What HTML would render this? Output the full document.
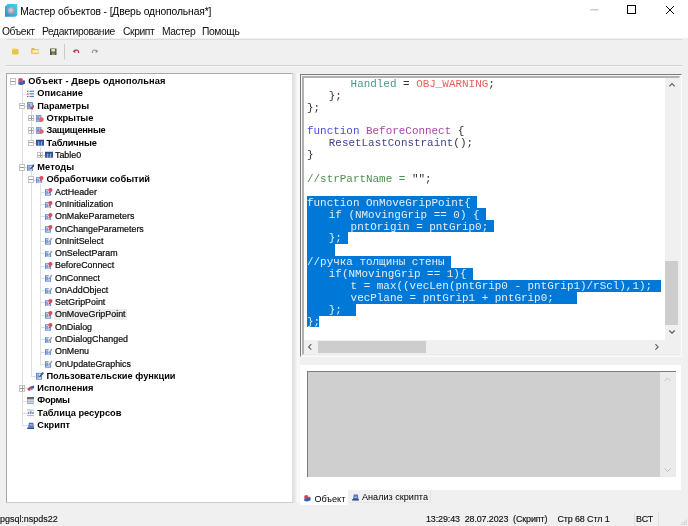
<!DOCTYPE html>
<html lang="ru"><head><meta charset="utf-8"><title>Мастер объектов</title>
<style>
html,body{margin:0;padding:0;}
body{width:688px;height:526px;overflow:hidden;position:relative;background:#f0f0f0;font-family:"Liberation Sans",sans-serif;color:#000;}
div,span,svg,i{position:absolute;display:block;}
.tr,.cl,.ttext,.mi,.tt,.st{will-change:opacity;opacity:0.999;}
.title{left:0;top:0;width:688px;height:22px;background:#fff;}
.ttext{left:20.3px;top:4.8px;color:#1a1a1a;font-size:10.3px;letter-spacing:-0.12px;line-height:14px;white-space:nowrap;color:#000;}
.menu{left:0;top:22px;width:688px;height:16px;background:#fff;}
.mi{top:2.6px;font-size:10.3px;line-height:14px;white-space:nowrap;letter-spacing:-0.4px;color:#111;}
.tbar{left:0;top:38px;width:688px;height:28px;background:#f0f0f0;}
.tree{left:6.2px;top:73.3px;width:286.4px;height:429.8px;background:#fff;border:1.6px solid #a9a9a9;border-right:1px solid #dedede;border-bottom:1px solid #cfcfcf;box-sizing:border-box;}
.tr{font-size:9.6px;line-height:12.28px;height:12.28px;white-space:nowrap;color:#000;}
.tb{font-weight:bold;font-size:9.25px;}
.tn{font-size:8.9px;-webkit-text-stroke:0.22px #222;margin-left:-0.4px;}
.sel{background:#ededed;}
.ex{width:6px;height:6.4px;box-sizing:border-box;border:1px solid #c4c4c4;background:#fff;}
.ex .h{left:0px;top:1.7px;width:4px;height:1px;background:#9a9a9a;}
.ex .v{left:1.5px;top:0px;width:1px;height:4.4px;background:#9a9a9a;}
.ln{background:#dcdfe3;}
.ed{left:300px;top:74px;width:382px;height:283px;box-sizing:border-box;border:1px solid #7c7c7c;border-right-color:#fbfbfb;border-bottom-color:#fbfbfb;background:#f3f3f3;}
.ed2{left:302px;top:76px;width:378px;height:278.5px;box-sizing:border-box;border:2px solid #b2b2b2;border-right:1px solid #ececec;border-bottom:1px solid #ececec;background:#fff;}
.cl{font-family:"Liberation Mono",monospace;font-size:10.93px;line-height:11.9px;height:11.9px;white-space:pre;color:#000;}
.cl span{position:static;display:inline;}
.sl{left:306.5px;height:12.1px;background:#0078d7;}
.w{color:#e4f0fc;}
.kw{color:#4a4ae0;} .fn{color:#a848a8;} .id{color:#4a9888;} .c{color:#e8605a;} .cm{color:#4f8f4f;} .id2{color:#45458a;} .k{color:#303030;}
.vsb{left:665px;top:78px;width:14.5px;height:275.5px;background:#f0f0f0;}
.hsb{left:304px;top:340px;width:361px;height:13.5px;background:#f0f0f0;}
.thumb{background:#cdcdcd;}
.bp{left:300px;top:364.5px;width:381px;height:125.5px;background:#fff;}
.bg{left:307px;top:371px;width:369px;height:106px;background:#cfcfcf;border-left:1px solid #7c7c7c;border-top:1px solid #7c7c7c;box-sizing:border-box;}
.bsb{left:660px;top:372px;width:15.5px;height:105px;background:#ebebeb;}
.tab1{left:300px;top:490px;width:48px;height:15.2px;background:#fff;}
.tab2{left:348px;top:490px;width:83px;height:13px;background:#f0f0f0;border-right:1px solid #e2e2e2;border-bottom:1px solid #e6e6e6;box-sizing:border-box;}
.tt{font-size:9.1px;line-height:12px;white-space:nowrap;}
.st{top:513px;font-size:8.95px;line-height:12px;white-space:nowrap;color:#000;-webkit-text-stroke:0.15px #333;}
.sd{top:511px;width:1px;height:15px;background:#e1e1e1;}
</style></head><body>
<div class="title"></div>
<svg style="left:4.9px;top:3.8px" width="13" height="13" viewBox="0 0 13 13"><defs><linearGradient id="g1" x1="1" y1="0" x2="0" y2="1"><stop offset="0" stop-color="#3fd6ea"/><stop offset="0.55" stop-color="#38b4dc"/><stop offset="1" stop-color="#2f86cc"/></linearGradient><radialGradient id="g2" cx="0.45" cy="0.4" r="0.6"><stop offset="0" stop-color="#d4d8de"/><stop offset="1" stop-color="#8c92a0"/></radialGradient></defs><path d="M2.6 0 H12.3 V9.8 Q12.3 12.8 9.3 12.8 H0 V2.6Z" fill="url(#g1)"/><circle cx="6.3" cy="6.8" r="3.7" fill="url(#g2)"/></svg>
<div class="ttext">Мастер объектов - [Дверь однопольная*]</div>
<svg style="left:565px;top:0" width="123" height="22" viewBox="0 0 123 22"><path d="M25.3 9.8 H33.5" stroke="#b4b4b4" stroke-width="1"/><rect x="62.5" y="5.5" width="8" height="8" fill="none" stroke="#000" stroke-width="1"/><path d="M101 6 L109 14 M109 6 L101 14" stroke="#000" stroke-width="1"/></svg>
<div class="menu">
<div class="mi" style="left:2px">Объект</div>
<div class="mi" style="left:42px">Редактирование</div>
<div class="mi" style="left:123px">Скрипт</div>
<div class="mi" style="left:162px">Мастер</div>
<div class="mi" style="left:202px">Помощь</div>
</div>
<div class="tbar"></div>
<div style="left:6px;top:65px;width:676px;height:1px;background:#d2d2d2"></div><div style="left:6px;top:66px;width:676px;height:1px;background:#f8f8f8"></div>
<div style="left:6px;top:38.6px;width:676px;height:1px;background:#dcdcdc"></div>
<svg style="left:8px;top:44px" width="100" height="16" viewBox="0 0 100 16">
<rect x="4" y="5" width="6.5" height="5.5" rx="0.8" fill="#e8c44a"/><rect x="4.8" y="4.2" width="3" height="1.5" fill="#f0d878"/>
<rect x="23" y="5" width="8" height="5" rx="0.8" fill="#e9c850"/><rect x="23.5" y="4.2" width="3" height="1.5" fill="#d8b030"/><rect x="24.5" y="6.2" width="6" height="2.6" fill="#fbf0b8"/>
<rect x="42" y="4.5" width="6.5" height="6.5" fill="#4a5a3a"/><rect x="43.3" y="5" width="3.8" height="2.6" fill="#d8e0c8"/><rect x="43.8" y="8.6" width="3" height="2.4" fill="#8a9a60"/>
<rect x="56" y="0" width="1" height="15.5" fill="#cacaca"/>
<path d="M64.7 7.3 L67.3 5.3 V9.2Z" fill="#b8344c"/><path d="M67 6.5 Q70.4 4.9 70.7 9" fill="none" stroke="#b8344c" stroke-width="1.3"/>
<path d="M90.3 7.3 L87.7 5.3 V9.2Z" fill="#8e8e8e"/><path d="M88 6.5 Q84.6 4.9 84.3 9" fill="none" stroke="#9a9a9a" stroke-width="1.3"/>
</svg>
<div class="tree"></div>
<div style="left:292.6px;top:73px;width:7.4px;height:430px;background:linear-gradient(to right,#dedede 0,#ebebeb 35%,#f9f9f9 65%,#f6f6f6 100%)"></div>
<!-- tree lines -->
<div class="ln" style="left:22.1px;top:85.3px;width:1px;height:339.8px"></div>
<div class="ln" style="left:22.1px;top:93.6px;width:7.0px;height:1px"></div>
<div class="ln" style="left:22.1px;top:105.9px;width:7.0px;height:1px"></div>
<div class="ln" style="left:22.1px;top:167.3px;width:7.0px;height:1px"></div>
<div class="ln" style="left:22.1px;top:388.3px;width:7.0px;height:1px"></div>
<div class="ln" style="left:22.1px;top:400.6px;width:7.0px;height:1px"></div>
<div class="ln" style="left:22.1px;top:412.9px;width:7.0px;height:1px"></div>
<div class="ln" style="left:22.1px;top:425.1px;width:7.0px;height:1px"></div>
<div class="ln" style="left:31.2px;top:109.9px;width:1px;height:32.8px"></div>
<div class="ln" style="left:31.2px;top:118.1px;width:6.0px;height:1px"></div>
<div class="ln" style="left:31.2px;top:130.4px;width:6.0px;height:1px"></div>
<div class="ln" style="left:31.2px;top:142.7px;width:6.0px;height:1px"></div>
<div class="ln" style="left:40.2px;top:146.7px;width:1px;height:8.3px"></div>
<div class="ln" style="left:40.2px;top:155.0px;width:6.0px;height:1px"></div>
<div class="ln" style="left:31.2px;top:171.3px;width:1px;height:204.8px"></div>
<div class="ln" style="left:31.2px;top:179.5px;width:6.0px;height:1px"></div>
<div class="ln" style="left:31.2px;top:376.0px;width:6.0px;height:1px"></div>
<div class="ln" style="left:40.2px;top:183.5px;width:1px;height:180.2px"></div>
<div class="ln" style="left:40.2px;top:191.8px;width:6.0px;height:1px"></div>
<div class="ln" style="left:40.2px;top:204.1px;width:6.0px;height:1px"></div>
<div class="ln" style="left:40.2px;top:216.4px;width:6.0px;height:1px"></div>
<div class="ln" style="left:40.2px;top:228.7px;width:6.0px;height:1px"></div>
<div class="ln" style="left:40.2px;top:240.9px;width:6.0px;height:1px"></div>
<div class="ln" style="left:40.2px;top:253.2px;width:6.0px;height:1px"></div>
<div class="ln" style="left:40.2px;top:265.5px;width:6.0px;height:1px"></div>
<div class="ln" style="left:40.2px;top:277.8px;width:6.0px;height:1px"></div>
<div class="ln" style="left:40.2px;top:290.1px;width:6.0px;height:1px"></div>
<div class="ln" style="left:40.2px;top:302.3px;width:6.0px;height:1px"></div>
<div class="ln" style="left:40.2px;top:314.6px;width:6.0px;height:1px"></div>
<div class="ln" style="left:40.2px;top:326.9px;width:6.0px;height:1px"></div>
<div class="ln" style="left:40.2px;top:339.2px;width:6.0px;height:1px"></div>
<div class="ln" style="left:40.2px;top:351.5px;width:6.0px;height:1px"></div>
<div class="ln" style="left:40.2px;top:363.7px;width:6.0px;height:1px"></div>
<span class="ex" style="left:10.0px;top:78.2px"><i class="h"></i></span>
<svg class="ic" style="left:17.9px;top:77.7px" width="7.6" height="7.6" viewBox="0 0 7 7"><path d="M0.3 0.8 L2.4 0 L4.4 0.8 V3 L0.3 3.6Z" fill="#cf4654"/><path d="M0.3 3.6 L4.4 2.8 L5.4 1.8 L6.6 2.6 V5.2 L3.4 6.6 L0.3 6Z" fill="#3f5cac"/></svg>
<div class="tr tb" style="left:28.3px;top:75.16px;letter-spacing:0.1px">Объект - Дверь однопольная</div>
<svg class="ic" style="left:26.9px;top:90.0px" width="7.6" height="7.6" viewBox="0 0 7 7"><rect x="0" y="0.6" width="1.3" height="1.1" fill="#d03a3a"/><rect x="2.3" y="0.6" width="4.7" height="1.1" fill="#5b7bd0"/><rect x="0" y="3" width="1.3" height="1.1" fill="#d03a3a"/><rect x="2.3" y="3" width="4.7" height="1.1" fill="#5b7bd0"/><rect x="0" y="5.4" width="1.3" height="1.1" fill="#d03a3a"/><rect x="2.3" y="5.4" width="4.7" height="1.1" fill="#5b7bd0"/></svg>
<div class="tr tb" style="left:37.3px;top:87.44px;letter-spacing:0.06px">Описание</div>
<span class="ex" style="left:19.0px;top:102.8px"><i class="h"></i></span>
<svg class="ic" style="left:26.9px;top:102.3px" width="7.6" height="7.6" viewBox="0 0 7 7"><rect x="0.4" y="0.4" width="4.6" height="5.8" fill="#b4c2e4" stroke="#6c88c8" stroke-width="0.8"/><rect x="1.4" y="1.5" width="1.2" height="3.4" fill="#5d7cc4"/><path d="M3.2 4.2 L4.6 6.4 L6.8 2.6" fill="none" stroke="#d03c58" stroke-width="1.3"/></svg>
<div class="tr tb" style="left:37.3px;top:99.72px;letter-spacing:-0.1px">Параметры</div>
<span class="ex" style="left:28.1px;top:115.0px"><i class="h"></i><i class=v></i></span>
<svg class="ic" style="left:36.0px;top:114.5px" width="7.6" height="7.6" viewBox="0 0 7 7"><rect x="0.4" y="0.4" width="4.2" height="5.8" fill="#a6b6e0" stroke="#7a92cc" stroke-width="0.8"/><rect x="1.3" y="1.4" width="1.1" height="3.4" fill="#6580c8"/><circle cx="5" cy="4.2" r="2.1" fill="#e2606c"/></svg>
<div class="tr tb" style="left:46.4px;top:112.00px;letter-spacing:-0.08px">Открытые</div>
<span class="ex" style="left:28.1px;top:127.3px"><i class="h"></i><i class=v></i></span>
<svg class="ic" style="left:36.0px;top:126.8px" width="7.6" height="7.6" viewBox="0 0 7 7"><rect x="0.4" y="0.4" width="4.2" height="5.8" fill="#a6b6e0" stroke="#7a92cc" stroke-width="0.8"/><rect x="1.3" y="1.4" width="1.1" height="3.4" fill="#6580c8"/><circle cx="5" cy="4.2" r="2.1" fill="#e2606c"/></svg>
<div class="tr tb" style="left:46.4px;top:124.28px;letter-spacing:-0.25px">Защищенные</div>
<span class="ex" style="left:28.1px;top:139.6px"><i class="h"></i></span>
<svg class="ic" style="left:36.0px;top:139.1px" width="7.6" height="7.6" viewBox="0 0 7 7"><rect x="0" y="0.8" width="7.4" height="5.4" fill="#3b5aa6"/><rect x="0" y="0.8" width="7.4" height="1.3" fill="#2c4688"/><rect x="2.1" y="2.3" width="0.8" height="3.9" fill="#a4b8e6"/><rect x="4.6" y="2.3" width="0.8" height="3.9" fill="#a4b8e6"/></svg>
<div class="tr tb" style="left:46.4px;top:136.56px;letter-spacing:-0.14px">Табличные</div>
<span class="ex" style="left:37.1px;top:151.9px"><i class="h"></i><i class=v></i></span>
<svg class="ic" style="left:45.0px;top:151.4px" width="7.6" height="7.6" viewBox="0 0 7 7"><rect x="0" y="0.8" width="7.4" height="5.4" fill="#3b5aa6"/><rect x="0" y="0.8" width="7.4" height="1.3" fill="#2c4688"/><rect x="2.1" y="2.3" width="0.8" height="3.9" fill="#a4b8e6"/><rect x="4.6" y="2.3" width="0.8" height="3.9" fill="#a4b8e6"/></svg>
<div class="tr tn" style="left:55.4px;top:148.84px">Table0</div>
<span class="ex" style="left:19.0px;top:164.2px"><i class="h"></i></span>
<svg class="ic" style="left:26.9px;top:163.7px" width="7.6" height="7.6" viewBox="0 0 7 7"><rect x="0.4" y="1.2" width="4.8" height="5.4" fill="#dfe8f8" stroke="#5680c8" stroke-width="0.8"/><rect x="1.3" y="2.2" width="1.2" height="3.4" fill="#5a82cc"/><path d="M3.2 4.6 L6.8 0.6" stroke="#4d5566" stroke-width="1.5"/></svg>
<div class="tr tb" style="left:37.3px;top:161.12px;letter-spacing:0.07px">Методы</div>
<span class="ex" style="left:28.1px;top:176.4px"><i class="h"></i></span>
<svg class="ic" style="left:36.0px;top:175.9px" width="7.6" height="7.6" viewBox="0 0 7 7"><rect x="0.4" y="1.6" width="4.8" height="5" fill="#dfe8f8" stroke="#5680c8" stroke-width="0.8"/><rect x="1.3" y="2.6" width="1.2" height="3" fill="#5a82cc"/><circle cx="5" cy="1.9" r="1.9" fill="#e2465a"/><path d="M3.4 5 L4.6 3.6" stroke="#7a5070" stroke-width="1"/></svg>
<div class="tr tb" style="left:46.4px;top:173.40px">Обработчики событий</div>
<svg class="ic" style="left:45.0px;top:188.2px" width="7.6" height="7.6" viewBox="0 0 7 7"><rect x="0.4" y="1.6" width="4.8" height="5" fill="#dfe8f8" stroke="#5680c8" stroke-width="0.8"/><rect x="1.3" y="2.6" width="1.2" height="3" fill="#5a82cc"/><circle cx="5" cy="1.9" r="1.9" fill="#e2465a"/><path d="M3.4 5 L4.6 3.6" stroke="#7a5070" stroke-width="1"/></svg>
<div class="tr tn" style="left:55.4px;top:185.68px">ActHeader</div>
<svg class="ic" style="left:45.0px;top:200.5px" width="7.6" height="7.6" viewBox="0 0 7 7"><rect x="0.4" y="1.6" width="4.8" height="5" fill="#dfe8f8" stroke="#5680c8" stroke-width="0.8"/><rect x="1.3" y="2.6" width="1.2" height="3" fill="#5a82cc"/><circle cx="5" cy="1.9" r="1.9" fill="#e2465a"/><path d="M3.4 5 L4.6 3.6" stroke="#7a5070" stroke-width="1"/></svg>
<div class="tr tn" style="left:55.4px;top:197.96px">OnInitialization</div>
<svg class="ic" style="left:45.0px;top:212.8px" width="7.6" height="7.6" viewBox="0 0 7 7"><rect x="0.4" y="1.6" width="4.8" height="5" fill="#dfe8f8" stroke="#5680c8" stroke-width="0.8"/><rect x="1.3" y="2.6" width="1.2" height="3" fill="#5a82cc"/><circle cx="5" cy="1.9" r="1.9" fill="#e2465a"/><path d="M3.4 5 L4.6 3.6" stroke="#7a5070" stroke-width="1"/></svg>
<div class="tr tn" style="left:55.4px;top:210.24px">OnMakeParameters</div>
<svg class="ic" style="left:45.0px;top:225.1px" width="7.6" height="7.6" viewBox="0 0 7 7"><rect x="0.4" y="1.6" width="4.8" height="5" fill="#dfe8f8" stroke="#5680c8" stroke-width="0.8"/><rect x="1.3" y="2.6" width="1.2" height="3" fill="#5a82cc"/><circle cx="5" cy="1.9" r="1.9" fill="#e2465a"/><path d="M3.4 5 L4.6 3.6" stroke="#7a5070" stroke-width="1"/></svg>
<div class="tr tn" style="left:55.4px;top:222.52px">OnChangeParameters</div>
<svg class="ic" style="left:45.0px;top:237.3px" width="7.6" height="7.6" viewBox="0 0 7 7"><rect x="0.4" y="1.6" width="4.8" height="5" fill="#d4e0f6" stroke="#5680c8" stroke-width="0.8"/><rect x="1.3" y="2.6" width="1.2" height="3" fill="#5a82cc"/><circle cx="5" cy="1.9" r="1.8" fill="#f2f5fb"/><path d="M3.3 5 L6.4 1" stroke="#8a94a8" stroke-width="1.1"/></svg>
<div class="tr tn" style="left:55.4px;top:234.80px">OnInitSelect</div>
<svg class="ic" style="left:45.0px;top:249.6px" width="7.6" height="7.6" viewBox="0 0 7 7"><rect x="0.4" y="1.6" width="4.8" height="5" fill="#d4e0f6" stroke="#5680c8" stroke-width="0.8"/><rect x="1.3" y="2.6" width="1.2" height="3" fill="#5a82cc"/><circle cx="5" cy="1.9" r="1.8" fill="#f2f5fb"/><path d="M3.3 5 L6.4 1" stroke="#8a94a8" stroke-width="1.1"/></svg>
<div class="tr tn" style="left:55.4px;top:247.08px">OnSelectParam</div>
<svg class="ic" style="left:45.0px;top:261.9px" width="7.6" height="7.6" viewBox="0 0 7 7"><rect x="0.4" y="1.6" width="4.8" height="5" fill="#dfe8f8" stroke="#5680c8" stroke-width="0.8"/><rect x="1.3" y="2.6" width="1.2" height="3" fill="#5a82cc"/><circle cx="5" cy="1.9" r="1.9" fill="#e2465a"/><path d="M3.4 5 L4.6 3.6" stroke="#7a5070" stroke-width="1"/></svg>
<div class="tr tn" style="left:55.4px;top:259.36px">BeforeConnect</div>
<svg class="ic" style="left:45.0px;top:274.2px" width="7.6" height="7.6" viewBox="0 0 7 7"><rect x="0.4" y="1.6" width="4.8" height="5" fill="#d4e0f6" stroke="#5680c8" stroke-width="0.8"/><rect x="1.3" y="2.6" width="1.2" height="3" fill="#5a82cc"/><circle cx="5" cy="1.9" r="1.8" fill="#f2f5fb"/><path d="M3.3 5 L6.4 1" stroke="#8a94a8" stroke-width="1.1"/></svg>
<div class="tr tn" style="left:55.4px;top:271.64px">OnConnect</div>
<svg class="ic" style="left:45.0px;top:286.5px" width="7.6" height="7.6" viewBox="0 0 7 7"><rect x="0.4" y="1.6" width="4.8" height="5" fill="#d4e0f6" stroke="#5680c8" stroke-width="0.8"/><rect x="1.3" y="2.6" width="1.2" height="3" fill="#5a82cc"/><circle cx="5" cy="1.9" r="1.8" fill="#f2f5fb"/><path d="M3.3 5 L6.4 1" stroke="#8a94a8" stroke-width="1.1"/></svg>
<div class="tr tn" style="left:55.4px;top:283.92px">OnAddObject</div>
<svg class="ic" style="left:45.0px;top:298.7px" width="7.6" height="7.6" viewBox="0 0 7 7"><rect x="0.4" y="1.6" width="4.8" height="5" fill="#dfe8f8" stroke="#5680c8" stroke-width="0.8"/><rect x="1.3" y="2.6" width="1.2" height="3" fill="#5a82cc"/><circle cx="5" cy="1.9" r="1.9" fill="#e2465a"/><path d="M3.4 5 L4.6 3.6" stroke="#7a5070" stroke-width="1"/></svg>
<div class="tr tn" style="left:55.4px;top:296.20px">SetGripPoint</div>
<svg class="ic" style="left:45.0px;top:311.0px" width="7.6" height="7.6" viewBox="0 0 7 7"><rect x="0.4" y="1.6" width="4.8" height="5" fill="#dfe8f8" stroke="#5680c8" stroke-width="0.8"/><rect x="1.3" y="2.6" width="1.2" height="3" fill="#5a82cc"/><circle cx="5" cy="1.9" r="1.9" fill="#e2465a"/><path d="M3.4 5 L4.6 3.6" stroke="#7a5070" stroke-width="1"/></svg>
<div class="sel" style="left:53.6px;top:309.4px;width:73.5px;height:10.7px"></div>
<div class="tr tn" style="left:55.4px;top:308.48px">OnMoveGripPoint</div>
<svg class="ic" style="left:45.0px;top:323.3px" width="7.6" height="7.6" viewBox="0 0 7 7"><rect x="0.4" y="1.6" width="4.8" height="5" fill="#dfe8f8" stroke="#5680c8" stroke-width="0.8"/><rect x="1.3" y="2.6" width="1.2" height="3" fill="#5a82cc"/><circle cx="5" cy="1.9" r="1.9" fill="#e2465a"/><path d="M3.4 5 L4.6 3.6" stroke="#7a5070" stroke-width="1"/></svg>
<div class="tr tn" style="left:55.4px;top:320.76px">OnDialog</div>
<svg class="ic" style="left:45.0px;top:335.6px" width="7.6" height="7.6" viewBox="0 0 7 7"><rect x="0.4" y="1.6" width="4.8" height="5" fill="#d4e0f6" stroke="#5680c8" stroke-width="0.8"/><rect x="1.3" y="2.6" width="1.2" height="3" fill="#5a82cc"/><circle cx="5" cy="1.9" r="1.8" fill="#f2f5fb"/><path d="M3.3 5 L6.4 1" stroke="#8a94a8" stroke-width="1.1"/></svg>
<div class="tr tn" style="left:55.4px;top:333.04px">OnDialogChanged</div>
<svg class="ic" style="left:45.0px;top:347.9px" width="7.6" height="7.6" viewBox="0 0 7 7"><rect x="0.4" y="1.6" width="4.8" height="5" fill="#d4e0f6" stroke="#5680c8" stroke-width="0.8"/><rect x="1.3" y="2.6" width="1.2" height="3" fill="#5a82cc"/><circle cx="5" cy="1.9" r="1.8" fill="#f2f5fb"/><path d="M3.3 5 L6.4 1" stroke="#8a94a8" stroke-width="1.1"/></svg>
<div class="tr tn" style="left:55.4px;top:345.32px">OnMenu</div>
<svg class="ic" style="left:45.0px;top:360.1px" width="7.6" height="7.6" viewBox="0 0 7 7"><rect x="0.4" y="1.6" width="4.8" height="5" fill="#d4e0f6" stroke="#5680c8" stroke-width="0.8"/><rect x="1.3" y="2.6" width="1.2" height="3" fill="#5a82cc"/><circle cx="5" cy="1.9" r="1.8" fill="#f2f5fb"/><path d="M3.3 5 L6.4 1" stroke="#8a94a8" stroke-width="1.1"/></svg>
<div class="tr tn" style="left:55.4px;top:357.60px">OnUpdateGraphics</div>
<svg class="ic" style="left:36.0px;top:372.4px" width="7.6" height="7.6" viewBox="0 0 7 7"><rect x="0.4" y="1.2" width="4.8" height="5.4" fill="#dfe8f8" stroke="#5680c8" stroke-width="0.8"/><rect x="1.3" y="2.2" width="1.2" height="3.4" fill="#5a82cc"/><path d="M3.2 4.6 L6.8 0.6" stroke="#4d5566" stroke-width="1.5"/></svg>
<div class="tr tb" style="left:46.4px;top:369.88px">Пользовательские функции</div>
<span class="ex" style="left:19.0px;top:385.2px"><i class="h"></i><i class=v></i></span>
<svg class="ic" style="left:26.9px;top:384.7px" width="7.6" height="7.6" viewBox="0 0 7 7"><path d="M0.2 3.6 L2.6 1.6 L3.6 3.6 L1.8 5.6Z" fill="#d23c40"/><path d="M2.6 1.6 L6.6 0.4 L6.8 2.6 L3.6 3.6Z" fill="#3c58aa"/><path d="M3.6 3.6 L6.8 2.6 L5.6 4.2 L1.8 5.6Z" fill="#7e90cc"/></svg>
<div class="tr tb" style="left:37.3px;top:382.16px">Исполнения</div>
<svg class="ic" style="left:26.9px;top:397.0px" width="7.6" height="7.6" viewBox="0 0 7 7"><rect x="0" y="0.2" width="7" height="6.4" fill="#a9b0bc"/><rect x="0" y="0.2" width="7" height="1.4" fill="#4a5260"/><rect x="0.8" y="2.6" width="5.4" height="0.8" fill="#dfe3ea"/><rect x="0.8" y="4.4" width="5.4" height="0.8" fill="#dfe3ea"/></svg>
<div class="tr tb" style="left:37.3px;top:394.44px;letter-spacing:-0.3px">Формы</div>
<svg class="ic" style="left:26.9px;top:409.3px" width="7.6" height="7.6" viewBox="0 0 7 7"><rect x="0" y="0.6" width="7" height="0.7" fill="#8a9cc8"/><rect x="0" y="5.8" width="7" height="0.7" fill="#8a9cc8"/><rect x="0.8" y="2.6" width="1.4" height="2" fill="#7a86b0"/><rect x="2.8" y="2" width="1.4" height="2.6" fill="#7a86b0"/><rect x="4.8" y="2.8" width="1.4" height="1.8" fill="#7a86b0"/></svg>
<div class="tr tb" style="left:37.3px;top:406.72px">Таблица ресурсов</div>
<svg class="ic" style="left:26.9px;top:421.5px" width="7.6" height="7.6" viewBox="0 0 7 7"><path d="M1.8 0.6 H5.8 L6.4 5 H1Z" fill="#4668b8"/><path d="M0.2 5 H6.8 V6.6 H0.2Z" fill="#2f4c98"/><rect x="2.4" y="1.8" width="2.8" height="0.7" fill="#b8c8ec"/><rect x="2.2" y="3.2" width="3.2" height="0.7" fill="#b8c8ec"/></svg>
<div class="tr tb" style="left:37.3px;top:419.00px">Скрипт</div>
<div class="ed"></div><div class="ed2"></div>
<div class="cl" style="top:78.70px;left:350.6px"><span class="id">Handled</span><span class="k"> = </span><span class="c">OBJ_WARNING</span><span class="k">;</span></div>
<div class="cl" style="top:90.60px;left:328.8px"><span class="k">};</span></div>
<div class="cl" style="top:102.50px;left:307.0px"><span class="k">};</span></div>
<div class="cl" style="top:126.30px;left:307.0px"><span class="kw">function</span><span class="k"> </span><span class="fn">BeforeConnect</span><span class="k"> {</span></div>
<div class="cl" style="top:138.20px;left:328.8px"><span class="id2">ResetLastConstraint</span><span class="k">();</span></div>
<div class="cl" style="top:150.10px;left:307.0px"><span class="k">}</span></div>
<div class="cl" style="top:173.90px;left:307.0px"><span class="cm">//strPartName = </span><span class="k">"";</span></div>
<div class="sl" style="top:196.40px;width:170.6px"></div>
<div class="cl" style="top:197.70px;left:307.0px"><span class="w">function OnMoveGripPoint{</span></div>
<div class="sl" style="top:208.30px;width:179.2px"></div>
<div class="cl" style="top:209.60px;left:328.8px"><span class="w">if (NMovingGrip == 0) {</span></div>
<div class="sl" style="top:220.20px;width:187.9px"></div>
<div class="cl" style="top:221.50px;left:350.6px"><span class="w">pntOrigin = pntGrip0;</span></div>
<div class="sl" style="top:232.10px;width:41.5px"></div>
<div class="cl" style="top:233.40px;left:328.8px"><span class="w">};</span></div>
<div class="sl" style="top:244.00px;width:28.4px"></div>
<div class="sl" style="top:255.90px;width:144.6px"></div>
<div class="cl" style="top:257.20px;left:307.0px"><span class="w">//ручка толщины стены</span></div>
<div class="sl" style="top:267.80px;width:166.8px"></div>
<div class="cl" style="top:269.10px;left:328.8px"><span class="w">if(NMovingGrip == 1){</span></div>
<div class="sl" style="top:279.70px;width:354.5px"></div>
<div class="cl" style="top:281.00px;left:350.6px"><span class="w">t = max((vecLen(pntGrip0 - pntGrip1)/rScl),1);</span></div>
<div class="sl" style="top:291.60px;width:270.6px"></div>
<div class="cl" style="top:292.90px;left:350.6px"><span class="w">vecPlane = pntGrip1 + pntGrip0;</span></div>
<div class="sl" style="top:303.50px;width:49.4px"></div>
<div class="cl" style="top:304.80px;left:328.8px"><span class="w">};</span></div>
<div class="sl" style="top:315.40px;width:12.5px"></div>
<div class="cl" style="top:316.70px;left:307.0px"><span class="w">};</span></div>
<div class="vsb"></div>
<div class="thumb" style="left:665.4px;top:260.5px;width:12.8px;height:64.5px"></div>
<svg style="left:665px;top:77px" width="14" height="263" viewBox="0 0 14 263"><path d="M4.3 9.3 L7 6.6 L9.7 9.3" fill="none" stroke="#5c5c5c" stroke-width="1.1"/><path d="M4.3 253.5 L7 256.2 L9.7 253.5" fill="none" stroke="#5c5c5c" stroke-width="1.1"/></svg>
<div class="hsb"></div>
<div class="thumb" style="left:318.2px;top:340.5px;width:107.6px;height:12.5px"></div>
<svg style="left:303px;top:340px" width="362" height="14" viewBox="0 0 362 14"><path d="M8.3 4.2 L5.6 6.9 L8.3 9.6" fill="none" stroke="#5c5c5c" stroke-width="1.1"/><path d="M352.4 4.2 L355.1 6.9 L352.4 9.6" fill="none" stroke="#5c5c5c" stroke-width="1.1"/></svg>
<div class="bp"></div><div class="bg"></div><div class="bsb"></div>
<svg style="left:660px;top:372px" width="14" height="105" viewBox="0 0 14 105"><path d="M4.5 9 L7.5 6 L10.5 9" fill="none" stroke="#c4c4c4" stroke-width="1"/><path d="M4.5 96.5 L7.5 99.5 L10.5 96.5" fill="none" stroke="#bdbdbd" stroke-width="1"/></svg>
<div class="tab1"></div><div class="tab2"></div>
<svg class="ic" style="left:304.2px;top:495px" width="7" height="7" viewBox="0 0 7 7"><path d="M0.3 0.8 L2.4 0 L4.4 0.8 V3 L0.3 3.6Z" fill="#cf4654"/><path d="M0.3 3.6 L4.4 2.8 L5.4 1.8 L6.6 2.6 V5.2 L3.4 6.6 L0.3 6Z" fill="#3f5cac"/></svg>
<div class="tt" style="left:314.4px;top:493px">Объект</div>
<svg class="ic" style="left:352px;top:494px" width="7" height="7" viewBox="0 0 7 7"><path d="M1.8 0.6 H5.8 L6.4 5 H1Z" fill="#4668b8"/><path d="M0.2 5 H6.8 V6.6 H0.2Z" fill="#2f4c98"/><rect x="2.4" y="1.8" width="2.8" height="0.7" fill="#b8c8ec"/><rect x="2.2" y="3.2" width="3.2" height="0.7" fill="#b8c8ec"/></svg>
<div class="tt" style="left:362px;top:491px">Анализ скрипта</div>
<div class="st" style="left:0px">pgsql:nspds22</div>
<div class="st" style="left:426px;letter-spacing:-0.11px">13:29:43&nbsp; 28.07.2023&nbsp; (Скрипт)</div>
<div class="st" style="left:557.4px;letter-spacing:-0.1px">Стр 68 Стл 1</div>
<div class="st" style="left:636px">ВСТ</div>
<div class="sd" style="left:634px"></div><div class="sd" style="left:658px"></div>
<svg style="left:680px;top:518px" width="8" height="8" viewBox="0 0 8 8"><g fill="#c2c2c2"><rect x="5.6" y="1.6" width="1.2" height="1.2"/><rect x="3.6" y="3.6" width="1.2" height="1.2"/><rect x="5.6" y="3.6" width="1.2" height="1.2"/><rect x="1.6" y="5.6" width="1.2" height="1.2"/><rect x="3.6" y="5.6" width="1.2" height="1.2"/><rect x="5.6" y="5.6" width="1.2" height="1.2"/></g></svg>
</body></html>
